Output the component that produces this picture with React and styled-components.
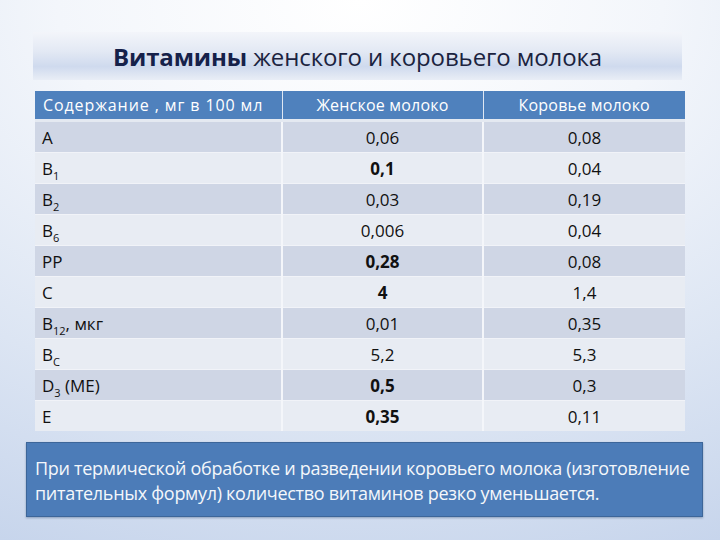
import React from "react";
import styled, { createGlobalStyle } from "styled-components";

const GlobalStyle = createGlobalStyle`
  html, body {
    margin: 0;
    padding: 0;
  }
  body {
    font-family: "Open Sans", "Noto Sans", sans-serif;
  }
`;

const Page = styled.div`
  width: 720px;
  height: 540px;
  box-sizing: border-box;
  padding-top: 32px;
  display: flex;
  flex-direction: column;
  background: radial-gradient(
    ellipse 120% 110% at 50% 0%,
    #ffffff 0%,
    #f3f6fb 35%,
    #dce5f3 70%,
    #c7d5ec 100%
  );
`;

const TitleBox = styled.div`
  margin-left: 33px;
  width: 649px;
  height: 48px;
  display: flex;
  align-items: center;
  justify-content: center;
  background: linear-gradient(
    to bottom,
    #f3f5fa 0%,
    #e3e9f4 40%,
    #cfdaee 72%,
    #e9eef6 100%
  );
`;

const Title = styled.h1`
  margin: 0;
  font-size: 24px;
  font-weight: 400;
  color: #1b2340;
  letter-spacing: -0.1px;
  white-space: nowrap;

  b {
    font-weight: 700;
    color: #15214a;
  }
`;

const Table = styled.table`
  margin-top: 11px;
  margin-left: 35px;
  width: 650px;
  border-collapse: collapse;
  table-layout: fixed;
`;

const HeadCell = styled.th`
  height: 28px;
  padding: 0 8px;
  background: #4f81bd;
  color: #ffffff;
  font-size: 16px;
  font-weight: 500;
  white-space: nowrap;
  text-align: ${({ $left }) => ($left ? "left" : "center")};
  letter-spacing: ${({ $left }) => ($left ? "0.9px" : "0.2px")};
  border-left: 1px solid #dfe7f3;
  border-bottom: 3px solid #e4e9f1;
  &:first-child {
    border-left: none;
  }
`;

const Row = styled.tr`
  background: ${({ $dark }) => ($dark ? "#cfd6e5" : "#e8ecf3")};
`;

const Cell = styled.td`
  height: 30px;
  padding: 0 7px;
  font-size: 17px;
  font-weight: ${({ $bold }) => ($bold ? 700 : 400)};
  color: #111111;
  text-align: ${({ $name }) => ($name ? "left" : "center")};
  border-left: 2px solid #f4f6fa;
  border-top: 1px solid #f1f3f8;

  &:first-child {
    border-left: none;
  }

  sub {
    font-size: 11px;
    vertical-align: -5px;
    line-height: 0;
  }
`;

const Note = styled.div`
  margin-top: 11px;
  margin-left: 26px;
  width: 677px;
  height: 75px;
  box-sizing: border-box;
  padding: 13px 8px 0 8px;
  background: #4c7cb8;
  border: 1px solid #3d6699;
  box-shadow: 0 1px 2px rgba(40, 70, 110, 0.4);
  color: #f4f7fb;
  font-size: 18px;
  line-height: 25px;
  letter-spacing: -0.3px;
  white-space: nowrap;
`;

const rows = [
  { name: "A", female: "0,06", cow: "0,08" },
  { name: "B", sub: "1", female: "0,1", cow: "0,04", bold: true },
  { name: "B", sub: "2", female: "0,03", cow: "0,19" },
  { name: "B", sub: "6", female: "0,006", cow: "0,04" },
  { name: "PP", female: "0,28", cow: "0,08", bold: true },
  { name: "C", female: "4", cow: "1,4", bold: true },
  { name: "B", sub: "12", suffix: ", мкг", female: "0,01", cow: "0,35" },
  { name: "B", sub: "C", female: "5,2", cow: "5,3" },
  { name: "D", sub: "3", suffix: " (МЕ)", female: "0,5", cow: "0,3", bold: true },
  { name: "E", female: "0,35", cow: "0,11", bold: true },
];

const App = () => (
  <Page>
    <GlobalStyle />
    <TitleBox>
      <Title>
        <b>Витамины</b> женского и коровьего молока
      </Title>
    </TitleBox>
    <Table>
      <colgroup>
        <col style={{ width: 247 }} />
        <col style={{ width: 201 }} />
        <col style={{ width: 202 }} />
      </colgroup>
      <thead>
        <tr>
          <HeadCell $left>Содержание , мг в 100 мл</HeadCell>
          <HeadCell>Женское молоко</HeadCell>
          <HeadCell>Коровье молоко</HeadCell>
        </tr>
      </thead>
      <tbody>
        {rows.map((r, i) => (
          <Row key={i} $dark={i % 2 === 0}>
            <Cell $name>
              {r.name}
              {r.sub && <sub>{r.sub}</sub>}
              {r.suffix}
            </Cell>
            <Cell $bold={r.bold}>{r.female}</Cell>
            <Cell>{r.cow}</Cell>
          </Row>
        ))}
      </tbody>
    </Table>
    <Note>
      При термической обработке и разведении коровьего молока (изготовление
      <br />
      питательных формул) количество витаминов резко уменьшается.
    </Note>
  </Page>
);

export default App;
